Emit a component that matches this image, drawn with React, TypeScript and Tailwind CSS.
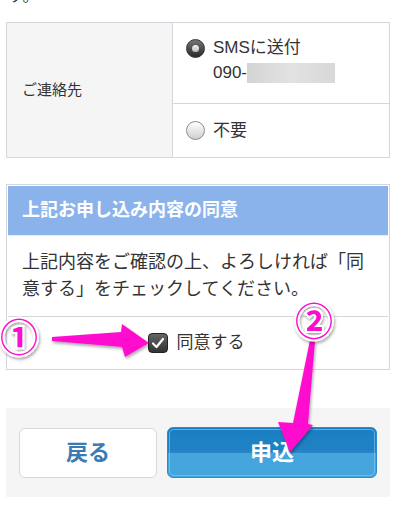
import React from "react";

function Radio({ checked }: { checked: boolean }) {
  if (checked) {
    return (
      <span className="flex h-[19px] w-[19px] shrink-0 items-center justify-center rounded-full border border-[#333] bg-gradient-to-b from-[#777] to-[#2a2a2a]">
        <span className="h-[7px] w-[7px] rounded-full bg-gradient-to-b from-[#f4f4f4] to-[#bbb]" />
      </span>
    );
  }
  return (
    <span className="h-[19px] w-[19px] shrink-0 rounded-full border border-[#8a8a8a] bg-gradient-to-b from-[#ffffff] to-[#cfcfcf]" />
  );
}

function CheckBox() {
  return (
    <span className="flex h-[20px] w-[20px] items-center justify-center rounded-[4px] border border-[#222] bg-gradient-to-b from-[#666] to-[#333]">
      <svg width="14" height="12" viewBox="0 0 14 12">
        <path d="M2 6.5 L5.5 10 L12 2" fill="none" stroke="#fff" strokeWidth="2.2" strokeLinecap="round" strokeLinejoin="round" />
      </svg>
    </span>
  );
}

function Annotations() {
  return (
    <svg className="pointer-events-none absolute inset-0" width="401" height="505" viewBox="0 0 401 505">
      <defs>
        <filter id="sh" x="-20%" y="-20%" width="140%" height="140%">
          <feDropShadow dx="1" dy="2" stdDeviation="1.5" floodColor="#000" floodOpacity="0.35" />
        </filter>
      </defs>
      <g filter="url(#sh)" fill="#ff0ccf">
        <polygon points="52,337 121,332 122,324 149,343 125,357 122,347 52,341" />
        <polygon points="310,340 315,341 308,424 313,425 290,452 278,422 293,423" />
      </g>
      <g
        fontFamily="'Noto Sans CJK JP', sans-serif"
        fontSize="38"
        fontWeight="700"
        fill="#ff0ccf"
        stroke="#fff"
        strokeWidth="4"
        paintOrder="stroke"
        textAnchor="middle"
        filter="url(#sh)"
      >
        <text x="19" y="351">①</text>
        <text x="314" y="335">②</text>
      </g>
    </svg>
  );
}

export default function App() {
  return (
    <div className="relative h-[505px] w-[401px] overflow-hidden bg-white font-['Liberation_Sans','Noto_Sans_CJK_JP',sans-serif] text-[#333]">
      <div className="flex h-[4px] items-end overflow-hidden pl-[8px]">
        <p className="shrink-0 text-[16px] leading-[17px]">す。</p>
      </div>

      <div className="mx-[6px] mt-[18px] grid w-[384px] grid-cols-[166px_1fr] border border-[#d6d6de]">
        <div className="row-span-2 flex items-center border-r border-[#d6d6de] bg-[#f5f5f5] pl-[15px] text-[15px]">
          ご連絡先
        </div>
        <div className="h-[81px] border-b border-[#d6d6de] pl-[13px] pt-[14px]">
          <div className="flex items-center gap-[8px]">
            <Radio checked />
            <span className="text-[17px] leading-[22px]">SMSに送付</span>
          </div>
          <div className="mt-[3px] flex items-center pl-[27px] text-[17px] leading-[22px]">
            090-
            <span className="h-[20px] w-[88px] bg-gradient-to-r from-[#d4d4d4] via-[#e2e2e2] to-[#d8d8d8]" />
          </div>
        </div>
        <div className="flex h-[53px] items-center gap-[8px] pl-[13px]">
          <Radio checked={false} />
          <span className="text-[17px]">不要</span>
        </div>
      </div>

      <div className="mx-[6px] mt-[26px] w-[384px] border border-[#d6d6de] p-px">
        <div className="flex h-[50px] items-center border-b border-[#e6eefb] bg-[#8ab3ec] pl-[14px] text-[18px] font-bold text-white">
          上記お申し込み内容の同意
        </div>
        <div className="border-b border-[#d6d6de] px-[14px] pb-[13px] pt-[13px] text-[18px] leading-[27px]">
          上記内容をご確認の上、よろしければ「同
          <br />
          意する」をチェックしてください。
        </div>
        <div className="flex h-[51px] items-center justify-center gap-[9px] pr-[4px]">
          <CheckBox />
          <span className="text-[17px]">同意する</span>
        </div>
      </div>

      <div className="mx-[6px] mt-[38px] flex h-[89px] w-[384px] items-center gap-[10px] bg-[#f5f5f5] pl-[13px]">
        <button className="flex h-[50px] w-[138px] items-center justify-center rounded-[6px] border border-[#d8d8dc] bg-white text-[22px] font-bold text-[#3a7bb3]">
          戻る
        </button>
        <button className="relative flex h-[51px] w-[210px] items-center justify-center overflow-hidden rounded-[6px] border border-[#2a8ad2] bg-[linear-gradient(#1a7fc3_0%,#1f82c4_45%,#2d86c6_50%,#45a6de_52%,#44a5dd_100%)] text-[22px] font-bold text-white">
          <span className="absolute inset-[1px] rounded-[5px] border border-[#8cc8ef]/60" />
          <span className="relative">申込</span>
        </button>
      </div>

      <Annotations />
    </div>
  );
}
